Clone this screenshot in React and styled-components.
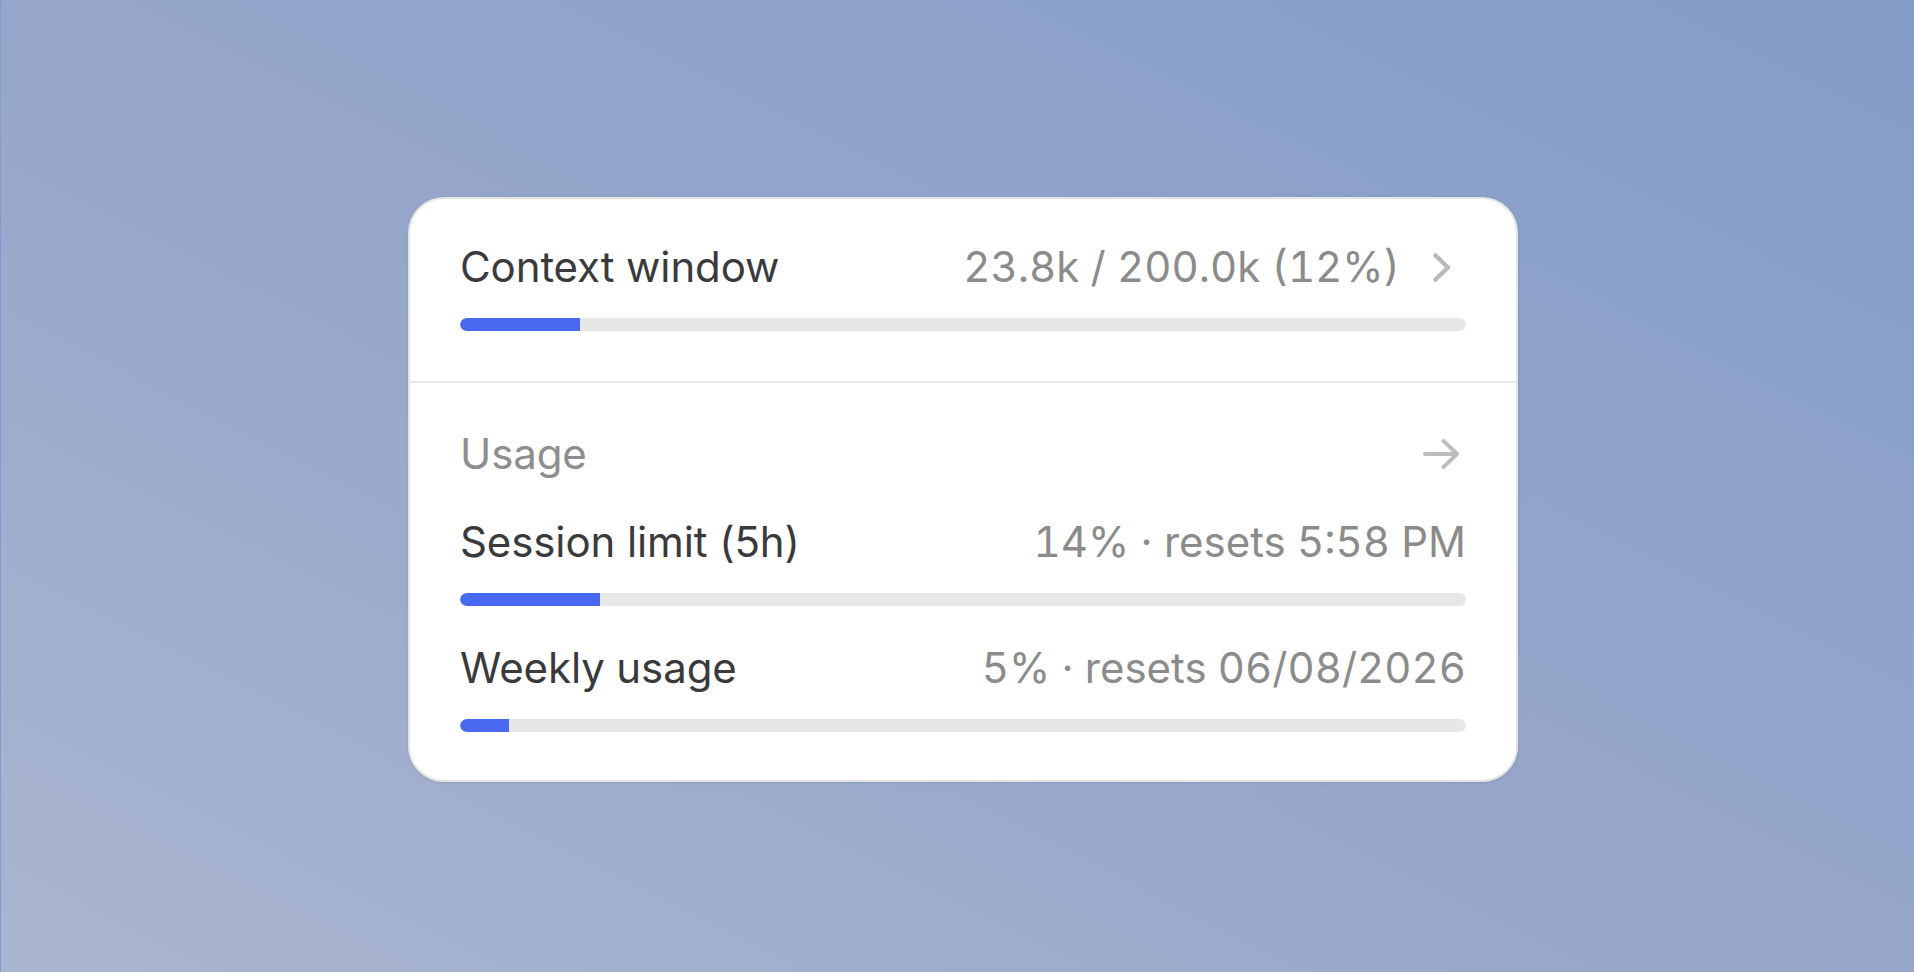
import React from 'react';
import styled, { createGlobalStyle } from 'styled-components';

const GlobalStyle = createGlobalStyle`
    html, body {
        margin: 0;
        padding: 0;
    }
    body {
        font-family: Inter, "Noto Sans", "Liberation Sans", sans-serif;
        -webkit-font-smoothing: antialiased;
    }
    * {
        box-sizing: border-box;
    }
`;

const Page = styled.div`
    width: 1914px;
    height: 972px;
    overflow: hidden;
    padding: 197px 0 0 407px;
    border-left: 1px solid #7d9bd6;
    background: linear-gradient(to top right, #aab5cf 0%, #97a7ca 45%, #849cc8 100%);
`;

const Card = styled.div`
    width: 1110px;
    background: #ffffff;
    border: 2px solid #e4e4e4;
    border-radius: 36px;
    box-shadow: 0 1px 3px rgba(40, 50, 80, 0.12);
    overflow: hidden;
`;

const Section = styled.div`
    display: flex;
    flex-direction: column;
    padding: ${({ top }) => top}px 50px ${({ bottom }) => bottom}px;
    border-bottom: ${({ divided }) => divided ? '2px solid #e8e8e6' : 'none'};
`;

const Row = styled.div`
    display: flex;
    align-items: center;
    justify-content: space-between;
    height: 48px;
    margin-top: ${({ gap }) => gap || 0}px;
`;

const Label = styled.span`
    font-size: 42px;
    line-height: 48px;
    color: ${({ muted }) => muted ? '#8e8e8e' : '#3a3a3c'};
    letter-spacing: -0.1px;
`;

const Value = styled.span`
    font-size: 42px;
    line-height: 48px;
    color: #8b8b8b;
    letter-spacing: 0;
    font-variant-numeric: tabular-nums;
`;

const Right = styled.div`
    display: flex;
    align-items: center;
    gap: 32px;
`;

const IconBox = styled.span`
    display: flex;
    align-items: center;
    justify-content: flex-end;
    width: ${({ w }) => w}px;
    padding-right: ${({ pr }) => pr || 0}px;
`;

const Track = styled.div`
    height: 13px;
    margin-top: 27px;
    border-radius: 7px;
    background: #e7e7e5;
    overflow: hidden;
`;

const Fill = styled.div`
    height: 100%;
    background: #4a69f1;
    border-radius: 7px 0 0 7px;
`;

const Chevron = () => (
    <svg width="20" height="31" viewBox="0 0 20 31" fill="none">
        <path d="M3.5 3.5 L16 15.5 L3.5 27.5" stroke="#b9b9b9" strokeWidth="4.5" strokeLinecap="round" strokeLinejoin="round" />
    </svg>
);

const Arrow = () => (
    <svg width="40" height="34" viewBox="0 0 40 34" fill="none">
        <path d="M3 17 H36 M22 3.5 L36 17 L22 30.5" stroke="#bdbdbd" strokeWidth="4" strokeLinecap="round" strokeLinejoin="round" />
    </svg>
);

const Meter = ({ pct }) => (
    <Track>
        <Fill style={{ width: `${pct}%` }} />
    </Track>
);

export default function App() {
    return (
        <>
            <GlobalStyle />
            <Page>
                <Card>
                    <Section top={44} bottom={50} divided>
                        <Row>
                            <Label>Context window</Label>
                            <Right>
                                <Value>23.8k / 200.0k (12%)</Value>
                                <IconBox w={34} pr={14}><Chevron /></IconBox>
                            </Right>
                        </Row>
                        <Meter pct={11.9} />
                    </Section>
                    <Section top={47} bottom={48}>
                        <Row>
                            <Label muted>Usage</Label>
                            <IconBox w={44} pr={5}><Arrow /></IconBox>
                        </Row>
                        <Row gap={40}>
                            <Label>Session limit (5h)</Label>
                            <Value>14% · resets 5:58 PM</Value>
                        </Row>
                        <Meter pct={13.9} />
                        <Row gap={38}>
                            <Label>Weekly usage</Label>
                            <Value>5% · resets 06/08/2026</Value>
                        </Row>
                        <Meter pct={4.9} />
                    </Section>
                </Card>
            </Page>
        </>
    );
}
